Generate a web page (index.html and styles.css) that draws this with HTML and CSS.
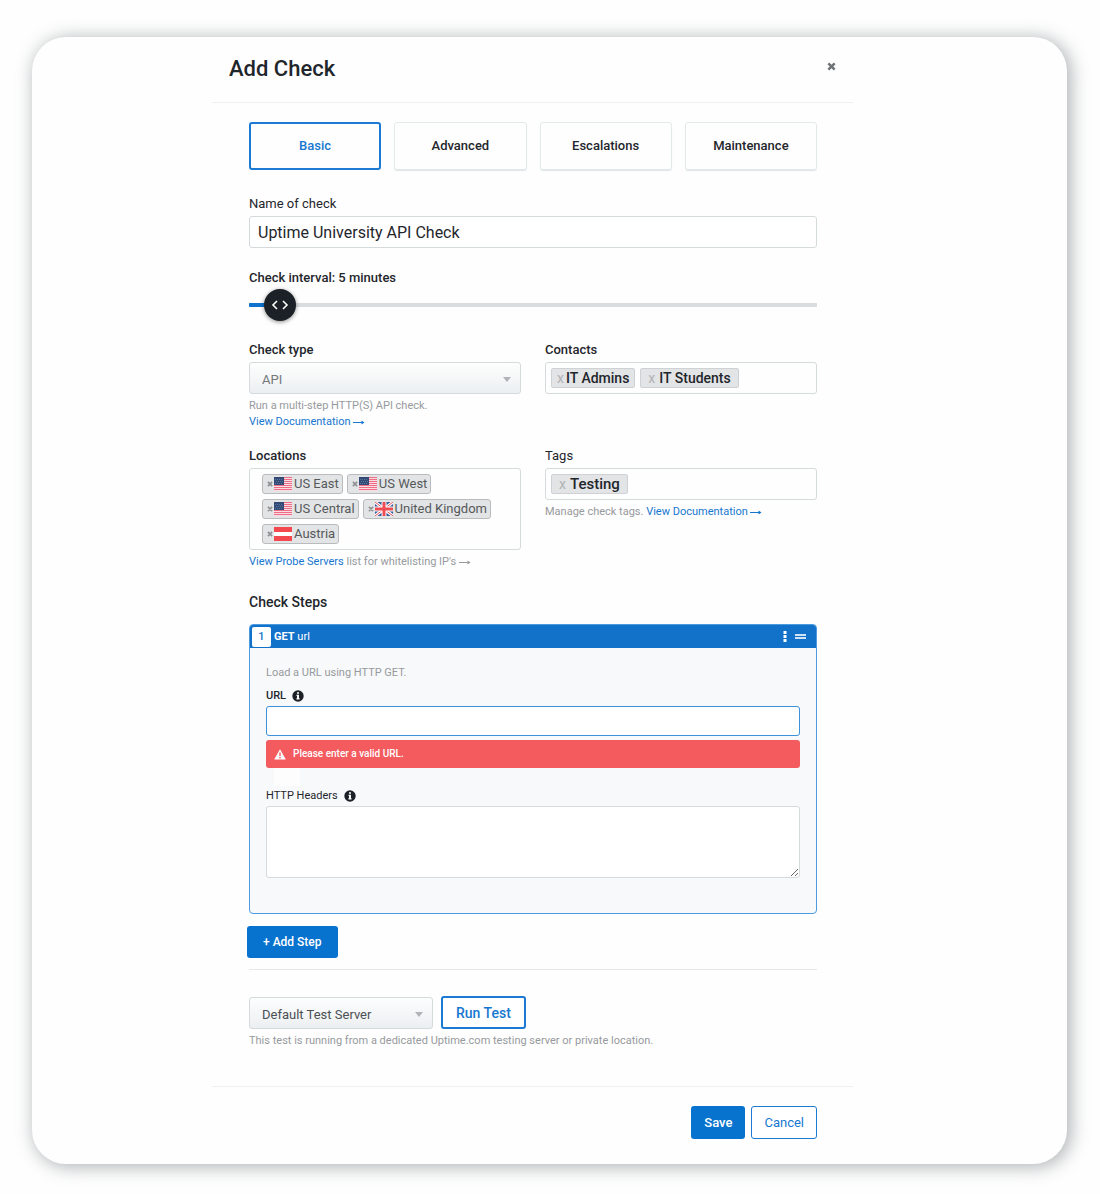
FILE: index.html
```html
<!DOCTYPE html>
<html lang="en">
<head>
<meta charset="utf-8">
<meta name="viewport" content="width=device-width, initial-scale=1">
<title>Add Check</title>
<link rel="stylesheet" href="styles.css">
</head>
<body>
<svg class="sprite" aria-hidden="true">
  <symbol id="flag-us" viewBox="0 0 18 14">
    <rect width="18" height="14" fill="#fbdce2"/>
    <path d="M0 .5h18M0 2.500h18M0 4.500h18M0 6.500h18M0 8.500h18M0 10.500h18M0 12.500h18" stroke="#ec6f87"/>
    <rect width="10" height="8" fill="#324a74"/>
    <path d="M1 2.500h8M2 4.500h7M1 6.500h8" stroke="#5a76a3" stroke-dasharray="1 1"/>
  </symbol>
  <symbol id="flag-gb" viewBox="0 0 18 14">
    <rect width="18" height="14" fill="#2f5a9b"/>
    <path d="M0 0l18 14M18 0L0 14" stroke="#fff" stroke-width="3"/>
    <path d="M0 0l18 14M18 0L0 14" stroke="#ef4b55"/>
    <path d="M9 0v14M0 7h18" stroke="#fff" stroke-width="5"/>
    <path d="M9 0v14M0 7h18" stroke="#ef4b55" stroke-width="3"/>
  </symbol>
  <symbol id="flag-at" viewBox="0 0 18 14">
    <rect width="18" height="14" fill="#f2484e"/>
    <rect y="5" width="18" height="4" fill="#fff"/>
  </symbol>
  <symbol id="cross" viewBox="0 0 8 8">
    <path d="M1.2 1.2l5.6 5.6M6.8 1.2L1.2 6.8" stroke="currentColor" stroke-width="2.2"/>
  </symbol>
  <symbol id="info" viewBox="0 0 12 12">
    <circle cx="6" cy="6" r="5.700" fill="#1b2127"/>
    <path d="M5 2.2h2v1.6H5zM4.5 4.8H7v3.4h.6v1.2H4.4V8.200H5V6h-.5z" fill="#fff"/>
  </symbol>
  <symbol id="arrow" viewBox="0 0 12 8">
    <path d="M0 4.500h10" fill="none" stroke="currentColor"/>
    <path d="M8.500 2.500L11.500 4.500L8.500 6.500z" fill="currentColor"/>
  </symbol>
</svg>

<main class="card">
  <form class="modal">
    <header class="modal-header">
      <h1>Add Check</h1>
      <button type="button" class="close" aria-label="Close"><svg class="close-icon"><use href="#cross"/></svg></button>
    </header>

    <div class="modal-body">
      <nav class="tabs">
        <button type="button" class="tab active">Basic</button>
        <button type="button" class="tab">Advanced</button>
        <button type="button" class="tab">Escalations</button>
        <button type="button" class="tab">Maintenance</button>
      </nav>

      <div class="field name-field">
        <label for="name">Name of check</label>
        <input class="control" id="name" type="text" value="Uptime University API Check">
      </div>

      <div class="field interval-field">
        <label class="strong" for="interval">Check interval: 5 minutes</label>
        <input class="slider" id="interval" type="range" min="0" max="180" value="5">
      </div>

      <div class="columns">
        <div class="field">
          <label class="strong" for="type">Check type</label>
          <div class="select-wrap"><select class="select muted" id="type"><option>API</option></select></div>
          <p class="help">Run a multi-step HTTP(S) API check.<br><a href="#">View Documentation <svg class="arrow"><use href="#arrow"/></svg></a></p>
        </div>
        <div class="field">
          <span class="label strong">Contacts</span>
          <div class="chip-box">
            <span class="chip"><button type="button" aria-label="Remove IT Admins">x</button>IT Admins</span>
            <span class="chip wide"><button type="button" aria-label="Remove IT Students">x</button>IT Students</span>
          </div>
        </div>
      </div>

      <div class="columns">
        <div class="field">
          <span class="label strong">Locations</span>
          <div class="chip-box locations">
            <span class="place"><button type="button" aria-label="Remove US East"><svg class="x"><use href="#cross"/></svg></button><svg class="flag"><use href="#flag-us"/></svg>US East</span>
            <span class="place"><button type="button" aria-label="Remove US West"><svg class="x"><use href="#cross"/></svg></button><svg class="flag"><use href="#flag-us"/></svg>US West</span>
            <span class="place"><button type="button" aria-label="Remove US Central"><svg class="x"><use href="#cross"/></svg></button><svg class="flag"><use href="#flag-us"/></svg>US Central</span>
            <span class="place"><button type="button" aria-label="Remove United Kingdom"><svg class="x"><use href="#cross"/></svg></button><svg class="flag"><use href="#flag-gb"/></svg>United Kingdom</span>
            <span class="place"><button type="button" aria-label="Remove Austria"><svg class="x"><use href="#cross"/></svg></button><svg class="flag"><use href="#flag-at"/></svg>Austria</span>
          </div>
          <p class="help"><a href="#">View Probe Servers</a> list for whitelisting IP's <svg class="arrow"><use href="#arrow"/></svg></p>
        </div>
        <div class="field">
          <span class="label">Tags</span>
          <div class="chip-box">
            <span class="chip wide tag"><button type="button" aria-label="Remove Testing">x</button>Testing</span>
          </div>
          <p class="help">Manage check tags. <a href="#">View Documentation <svg class="arrow"><use href="#arrow"/></svg></a></p>
        </div>
      </div>

      <h2>Check Steps</h2>
      <section class="step">
        <header class="step-header">
          <span class="step-number">1</span>
          <span class="step-title"><b>GET</b> url</span>
          <button type="button" aria-label="Step options"><svg width="4" height="11" viewBox="0 0 4 11"><path d="M.5 0h3v3h-3zM.5 4h3v3h-3zM.5 8h3v3h-3z" fill="#fff"/></svg></button>
          <button type="button" aria-label="Drag step"><svg width="11" height="5" viewBox="0 0 11 5"><path d="M0 1h11M0 4h11" stroke="#cfe3f6" stroke-width="2"/></svg></button>
        </header>
        <div class="step-body">
          <p class="step-help">Load a URL using HTTP GET.</p>
          <label class="small strong" for="url">URL <svg class="info"><use href="#info"/></svg></label>
          <input class="control url" id="url" type="text">
          <div class="error" role="alert">
            <svg width="12" height="11" viewBox="0 0 12 11"><path d="M6 .3L11.800 10.500H.2z" fill="#fff"/><path d="M6 3.500v3.500M6 8v1.400" stroke="#f35b5f" stroke-width="1.400"/></svg>
            Please enter a valid URL.
          </div>
          <label class="small" for="headers">HTTP Headers <svg class="info"><use href="#info"/></svg></label>
          <textarea class="control headers" id="headers"></textarea>
        </div>
      </section>

      <button type="button" class="btn primary add-step">+ Add Step</button>
      <hr>
      <div class="test-row">
        <div class="select-wrap server"><select class="select" aria-label="Test server"><option>Default Test Server</option></select></div>
        <button type="button" class="btn outline run">Run Test</button>
      </div>
      <p class="help">This test is running from a dedicated Uptime.com testing server or private location.</p>
    </div>

    <footer class="modal-footer">
      <button type="submit" class="btn primary">Save</button>
      <button type="button" class="btn outline thin">Cancel</button>
    </footer>
  </form>
</main>
</body>
</html>
```

FILE: styles.css
```css
* { box-sizing: border-box; }

body {
  margin: 0;
  padding: 37px 33px 29px 32px;
  background: #fefefe;
  color: #1f262c;
  font: 13px/16px Roboto, "Liberation Sans", sans-serif;
}

button, input, select, textarea { font: inherit; color: inherit; }
button { padding: 0; border: 0; background: none; cursor: pointer; }
h1, h2, p { margin: 0; }
svg { flex: none; }
a { color: #1677cf; text-decoration: none; }
.sprite { display: none; }

.card {
  background: #fefefe;
  border-radius: 34px;
  box-shadow: 3px 2px 18px 1px rgba(55, 65, 70, 0.4);
}

.modal { max-width: 821px; padding-left: 180px; }

.modal-header {
  display: flex;
  justify-content: space-between;
  align-items: center;
  height: 66px;
  padding: 0 17px 2px;
  border-bottom: 1px solid #edf1f4;
}
h1 { font-size: 22px; line-height: 26px; font-weight: 500; }
.close { display: flex; padding: 0 0 4px; color: #707376; }
.close-icon { width: 9px; height: 9px; }

.modal-body { padding: 19px 36px 37px 37px; }

.tabs { display: grid; grid-template-columns: repeat(4, 1fr); gap: 13px; }
.tab {
  height: 48px;
  border: 1px solid #e4e9eb;
  border-radius: 3px;
  box-shadow: 0 1px 1px #dde3e5;
  font-weight: 500;
}
.tab.active { border: 2px solid #1c7ad2; box-shadow: none; color: #1677cf; }

.field { display: flex; flex-direction: column; min-width: 0; }
.name-field { margin-top: 26px; }
.interval-field { margin-top: 22px; }
label, .label { margin-bottom: 4px; }
.strong { font-weight: 500; }

.control {
  width: 100%;
  height: 32px;
  padding: 0 8px;
  border: 1px solid #d5dadc;
  border-radius: 3px;
  background: #fff;
  font-size: 16px;
}

.slider {
  appearance: none;
  width: 100%;
  height: 32px;
  margin: -1px 0 0;
  border-radius: 16px / 50%;
  background: linear-gradient(90deg, #0f73ce 16px, #dadcde 16px) center / 100% 4px no-repeat;
}
.slider::-webkit-slider-thumb {
  appearance: none;
  width: 32px;
  height: 32px;
  border-radius: 50%;
  background: #1b2127 url("data:image/svg+xml,%3Csvg xmlns='http://www.w3.org/2000/svg' width='18' height='12' viewBox='0 0 18 12' fill='none' stroke='white' stroke-width='1.600'%3E%3Cpath d='M6 2L2 6l4 4M12 2L16 6l-4 4'/%3E%3C/svg%3E") center no-repeat;
  box-shadow: 0 1px 4px rgba(0, 0, 0, 0.45);
}

.columns { display: grid; grid-template-columns: 1fr 1fr; gap: 24px; margin-top: 21px; }
.columns + .columns { margin-top: 18px; }

.select-wrap { position: relative; }
.select-wrap::after {
  content: "";
  position: absolute;
  top: 15px;
  right: 10px;
  border: 4px solid transparent;
  border-top: 5px solid #b0b4b7;
  border-bottom: 0;
  pointer-events: none;
}
.select {
  appearance: none;
  display: block;
  width: 100%;
  height: 32px;
  padding: 3px 24px 0 12px;
  border: 1px solid #d5dadc;
  border-radius: 3px;
  background: linear-gradient(#fdfefe, #eceff1);
  color: #4b5054;
}
.select.muted { color: #74787b; }

.help { margin-top: 4px; font-size: 11px; color: #979a9d; }
.arrow { width: 12px; height: 8px; vertical-align: -1px; }

.chip-box {
  display: flex;
  flex-wrap: wrap;
  align-items: center;
  gap: 5px;
  min-height: 32px;
  padding: 5px;
  border: 1px solid #d5dadc;
  border-radius: 3px;
}
.chip {
  display: flex;
  align-items: center;
  gap: 2px;
  height: 20px;
  padding: 0 5px;
  border: 1px solid #cfd2d4;
  border-radius: 2px;
  background: #e3e4e6;
  font-size: 14px;
  font-weight: 500;
}
.chip.wide { gap: 4px; padding: 0 7px; }
.chip.tag { font-size: 15px; }
.chip button { color: #b0b2b4; font-size: 14px; font-weight: 400; }

.locations { gap: 5px 4px; padding: 5px 12px; }
.place {
  display: flex;
  align-items: center;
  height: 20px;
  padding: 0 3px;
  border: 1px solid #b9bbbd;
  border-radius: 3px;
  background: #e3e4e5;
  color: #55595c;
}
.place button { display: flex; width: 8px; justify-content: center; color: #8e9193; }
.x { width: 6px; height: 6px; }
.flag { width: 18px; height: 14px; margin-right: 2px; }

h2 { margin: 24px 0 14px; font-size: 14px; line-height: 16px; font-weight: 500; }

.step {
  overflow: hidden;
  border: 1px solid #4c9adf;
  border-radius: 4px;
  background: #f7f9fb;
}
.step-header {
  display: flex;
  align-items: center;
  height: 23px;
  padding: 0 10px 0 2px;
  background: #1272ca;
  color: #fff;
  font-size: 11px;
}
.step-header button { display: flex; margin-left: 8px; }
.step-number {
  width: 19px;
  height: 20px;
  border-radius: 2px;
  background: #fff;
  color: #1272ca;
  font-weight: 500;
  line-height: 20px;
  text-align: center;
}
.step-title { flex: 1; padding-left: 3px; }
.step-title b { font-weight: 700; }
.step-body { display: flex; flex-direction: column; padding: 17px 16px 35px; }
.step-help { margin-bottom: 7px; font-size: 11px; color: #979a9d; }
.small { display: flex; align-items: center; gap: 6px; margin-bottom: 2px; font-size: 11px; }
.info { width: 12px; height: 12px; }
.url { height: 30px; border-color: #3d90da; }

.error {
  position: relative;
  display: flex;
  align-items: center;
  gap: 7px;
  height: 28px;
  margin: 4px 0 20px;
  padding: 0 8px;
  border-radius: 3px;
  background: #f35b5f;
  color: #fff;
  font-size: 10px;
  font-weight: 500;
}
.error::after {
  content: "";
  position: absolute;
  top: 28px;
  left: 8px;
  width: 26px;
  height: 18px;
  background: #fdfdfe;
}
.headers { height: 72px; resize: vertical; }

.btn {
  height: 33px;
  padding: 0 13px;
  border-radius: 3px;
  font-weight: 500;
}
.primary { background: #0873ce; color: #fff; }
.outline { border: 2px solid #1c7ad2; background: #fff; color: #1677cf; }
.thin { padding: 0 12px; border-width: 1px; font-weight: 400; }
.add-step { display: block; height: 32px; margin: 12px 0 11px -2px; padding: 0 16px; font-size: 12px; }

hr { height: 1px; margin: 0 0 26px; border: 0; background: #e5e8ea; }
.test-row { display: flex; align-items: flex-end; gap: 8px; }
.server { width: 184px; }
.run { font-size: 14px; }

.modal-footer {
  display: flex;
  justify-content: flex-end;
  gap: 6px;
  padding: 19px 36px 25px;
  border-top: 1px solid #eef0f2;
}
```
